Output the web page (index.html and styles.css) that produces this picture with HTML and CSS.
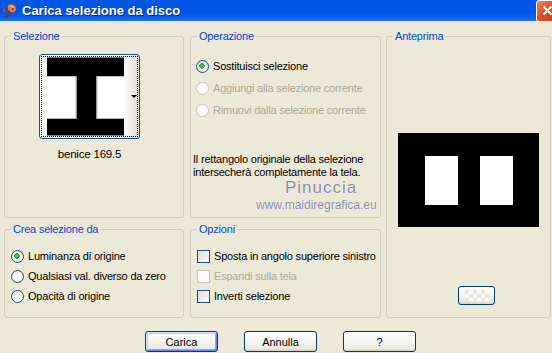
FILE: index.html
```html
<!DOCTYPE html>
<html lang="it">
<head>
  <meta charset="UTF-8">
  <title>Carica selezione da disco</title>
  <link rel="stylesheet" href="styles.css">
</head>
<body>
  <div class="window">
    <div class="titlebar">
      <svg class="app-icon" width="16" height="16" viewBox="0 0 16 16">
        <path d="M3 14 L9 5 L11 6 L5 15 Z" fill="#7a3b12"/>
        <path d="M6 2 C9 0 14 2 14 6 C14 9 11 10 9 9 C7 8 5 6 6 2 Z" fill="#f07a2a"/>
        <path d="M8 3 C10 2 12 3 12 5 C11 4 9 4 8 3 Z" fill="#ffd36a"/>
        <path d="M2 4 C3 6 4 8 3 10 L1 8 Z" fill="#d8322a"/>
        <circle cx="11" cy="6" r="1" fill="#2b4aa8"/>
      </svg>
      <span class="title">Carica selezione da disco</span>
      <span class="close">
        <svg width="11" height="11" viewBox="0 0 11 11">
          <path d="M1.5 1.5 L9.5 9.5 M9.5 1.5 L1.5 9.5" stroke="#fff" stroke-width="2"/>
        </svg>
      </span>
    </div>

    <div class="client">
      <div class="groups">
        <div class="group sel">
          <span class="legend">Selezione</span>
          <div class="thumbwrap">
            <div class="thumb">
              <div class="focus">
                <svg width="78" height="79" viewBox="0 0 78 79">
                  <rect width="78" height="79" fill="#000"/>
                  <rect x="0" y="19" width="30" height="43" fill="#fff"/>
                  <rect x="50" y="19" width="28" height="43" fill="#fff"/>
                  <rect x="29" y="19" width="1" height="43" fill="#9a9a9a"/>
                  <rect x="50" y="19" width="1" height="43" fill="#9a9a9a"/>
                </svg>
                <span class="drop"></span>
              </div>
            </div>
            <div class="caption">benice 169.5</div>
          </div>
        </div>

        <div class="group op">
          <span class="legend">Operazione</span>
          <div class="opts opts-wide">
            <label class="opt"><input type="radio" name="op" checked> Sostituisci selezione</label>
            <label class="opt disabled"><input type="radio" name="op" disabled> Aggiungi alla selezione corrente</label>
            <label class="opt disabled"><input type="radio" name="op" disabled> Rimuovi dalla selezione corrente</label>
          </div>
          <p class="note">Il rettangolo originale della selezione<br>intersecherà completamente la tela.</p>
          <div class="watermark">
            <div class="wm-name">Pinuccia</div>
            <div class="wm-url">www.maidiregrafica.eu</div>
          </div>
        </div>

        <div class="group prev">
          <span class="legend">Anteprima</span>
          <svg class="preview" width="141" height="94" viewBox="0 0 141 94">
            <rect width="141" height="94" fill="#000"/>
            <rect x="27" y="23" width="33" height="49" fill="#fff"/>
            <rect x="82" y="23" width="33" height="49" fill="#fff"/>
          </svg>
          <button class="btn small"><span class="checker"></span></button>
        </div>

        <div class="group crea">
          <span class="legend">Crea selezione da</span>
          <div class="opts">
            <label class="opt"><input type="radio" name="src" checked> Luminanza di origine</label>
            <label class="opt"><input type="radio" name="src"> Qualsiasi val. diverso da zero</label>
            <label class="opt"><input type="radio" name="src"> Opacità di origine</label>
          </div>
        </div>

        <div class="group opz">
          <span class="legend">Opzioni</span>
          <div class="opts">
            <label class="opt"><input type="checkbox"> Sposta in angolo superiore sinistro</label>
            <label class="opt disabled"><input type="checkbox" disabled> Espandi sulla tela</label>
            <label class="opt"><input type="checkbox"> Inverti selezione</label>
          </div>
        </div>
      </div>

      <div class="actions">
        <button class="btn default">Carica</button>
        <button class="btn">Annulla</button>
        <button class="btn">?</button>
      </div>
    </div>
  </div>
</body>
</html>
```

FILE: styles.css
```css
body {
  margin: 0;
  background: #ece9d8;
  font-family: "Liberation Sans", Arial, sans-serif;
  font-size: 11px;
  letter-spacing: -0.2px;
  color: #000;
  overflow: hidden;
}
.window {
  width: 552px;
  height: 353px;
  display: flex;
  flex-direction: column;
}
.titlebar {
  height: 21px;
  display: flex;
  align-items: center;
  overflow: hidden;
  background: linear-gradient(#0058e6, #0053e1 55%, #0a62ee 85%, #2274f5);
}
.app-icon {
  margin: 0 4px 0 2px;
}
.title {
  flex: 1;
  color: #fff;
  font-weight: bold;
  font-size: 13px;
  letter-spacing: 0;
  text-shadow: 1px 1px #0a2a8c;
}
.close {
  width: 20px;
  height: 20px;
  margin-right: -6px;
  display: flex;
  align-items: center;
  justify-content: center;
  border: 1px solid #fff;
  border-radius: 3px;
  background: linear-gradient(135deg, #f08a66, #e0502a 45%, #c8361a);
}
.client {
  padding: 15px 0 0 4px;
}
.groups {
  display: grid;
  grid-template-columns: 180px 6px 191px 5px 165px;
  grid-template-rows: 182px 11px 89px;
  grid-template-areas:
    "sel . op . prev"
    ". . . . prev"
    "crea . opz . prev";
}
.group {
  position: relative;
  box-sizing: border-box;
  border: 1px solid #d0d0bf;
  border-radius: 3px;
  display: flex;
  flex-direction: column;
  align-items: flex-start;
}
.sel { grid-area: sel; }
.op { grid-area: op; }
.prev { grid-area: prev; }
.crea { grid-area: crea; }
.opz { grid-area: opz; }
.legend {
  position: absolute;
  top: -7px;
  left: 6px;
  padding: 0 2px;
  line-height: 13px;
  background: #ece9d8;
  color: #0046d5;
}

/* Selezione */
.thumbwrap {
  margin: 17px 0 0 34px;
  width: 101px;
}
.thumb {
  box-sizing: border-box;
  width: 101px;
  height: 85px;
  border: 1px solid #1c5180;
  border-radius: 3px;
  background: linear-gradient(to right, #fff 84%, #dedbd0);
}
.focus {
  box-sizing: border-box;
  height: 81px;
  margin: 1px;
  padding-left: 5px;
  border: 1px dotted #000;
  display: flex;
  align-items: center;
}
.drop {
  margin-left: 7px;
  border-left: 3px solid transparent;
  border-right: 3px solid transparent;
  border-top: 3px solid #000;
}
.caption {
  margin-top: 9px;
  text-align: center;
  font-size: 11.5px;
  line-height: 13px;
}

/* options */
.opts {
  padding: 16px 0 0 6px;
}
.opts-wide {
  padding: 18px 0 0 5px;
}
.opts-wide .opt {
  height: 22px;
}
.opt {
  height: 20px;
  display: flex;
  align-items: center;
  gap: 4px;
  white-space: nowrap;
}
.opt.disabled {
  color: #aca899;
}
input[type="radio"],
input[type="checkbox"] {
  appearance: none;
  margin: 0;
  width: 13px;
  height: 13px;
  box-sizing: border-box;
  border: 1px solid #1c5180;
}
input[type="radio"] {
  border-radius: 50%;
  background: radial-gradient(circle at 60% 60%, #fff 30%, #dcd9cc);
}
input[type="radio"]:checked {
  background:
    radial-gradient(circle at 45% 45%, #5edc5e 0, #21a121 2.5px, transparent 3px),
    radial-gradient(circle at 60% 60%, #fff 30%, #dcd9cc);
}
input[type="checkbox"] {
  background: linear-gradient(135deg, #dcdcd5, #fff);
}
input:disabled {
  border-color: #cac8bb;
  background: #fff;
}
.note {
  margin: 32px 0 0 2px;
  line-height: 13px;
}
.watermark {
  position: absolute;
  top: 141px;
  left: 65px;
  color: #8c8ca8;
  text-shadow: 0 0 1px #fff;
}
.wm-name {
  margin-left: 29px;
  font-size: 17px;
  line-height: 20px;
  letter-spacing: 1px;
}
.wm-url {
  font-size: 12px;
  line-height: 14px;
  letter-spacing: 0;
}

/* Anteprima */
.preview {
  margin: 96px 0 0 11px;
}
.btn {
  box-sizing: border-box;
  width: 73px;
  height: 21px;
  padding: 0;
  font-family: "Liberation Sans", Arial, sans-serif;
  font-size: 11px;
  color: #000;
  border: 1px solid #003c74;
  border-radius: 3px;
  background: linear-gradient(#fff, #f4f4f0 45%, #ecebe6 85%, #d6d0c5);
}
.btn.default {
  box-shadow: inset 1px 1px #cee7ff, inset -1px -1px #6982ee, inset 2px 2px #bcd4f6, inset -2px -2px #89ade4;
}
.btn.small {
  width: 37px;
  height: 19px;
  margin: 59px 0 0 71px;
  display: flex;
  align-items: center;
  justify-content: center;
}
.checker {
  width: 24px;
  height: 11px;
  background:
    repeating-conic-gradient(#fbfbf8 0 25%, #e8e7e0 0 50%) 0 0 / 8px 8px;
}

.actions {
  display: flex;
  justify-content: center;
  gap: 26px;
  margin-top: 13px;
  padding-left: 5px;
}
```
